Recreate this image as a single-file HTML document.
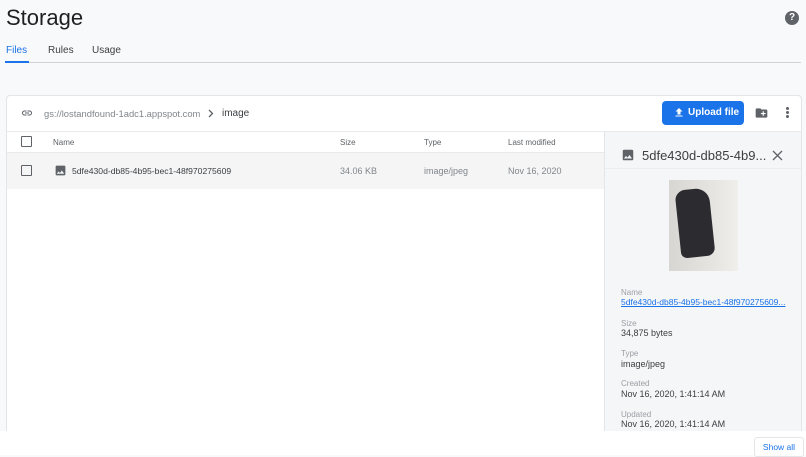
<!DOCTYPE html>
<html><head><meta charset="utf-8"><style>
*{margin:0;padding:0;box-sizing:border-box}
body{width:806px;height:455px;overflow:hidden;background:#f8f9fa;font-family:"Liberation Sans",Arial,sans-serif;color:#202124;position:relative}
.abs{position:absolute}
.t{font-size:9px;color:#5f6368}
.cb{position:absolute;width:11px;height:11px;border:1.5px solid #5f6368;border-radius:1px}
</style></head><body>
<div class="abs" style="left:6px;top:5px;font-size:22px;color:#202124">Storage</div>
<div class="abs" style="left:785px;top:11px;width:14px;height:14px;border-radius:50%;background:#5f6368;color:#fff;font-size:10px;font-weight:bold;text-align:center;line-height:14px">?</div>
<div class="abs" style="left:6px;top:45px;font-size:10px;color:#1a73e8">Files</div>
<div class="abs" style="left:48px;top:45px;font-size:10px;color:#3c4043">Rules</div>
<div class="abs" style="left:92px;top:45px;font-size:10px;color:#3c4043">Usage</div>
<div class="abs" style="left:5px;top:62px;width:796px;height:1px;background:#cfd2d6"></div>
<div class="abs" style="left:5px;top:61px;width:24px;height:2px;background:#1a73e8"></div>

<div class="abs" style="left:6px;top:95px;width:796px;height:340px;background:#fff;border:1px solid #e3e5e8;border-radius:4px"></div>
<div class="abs" style="left:7px;top:131px;width:597px;height:1px;background:#e8eaed"></div>
<div class="abs" style="left:604px;top:131px;width:197px;height:300px;background:#f5f6f7;border-left:1px solid #e3e5e8;border-top:1px solid #e8eaed"></div>
<svg class="abs" style="left:20px;top:107px" width="14" height="12" viewBox="0 0 24 24"><path d="M3.9 12c0-1.7 1.4-3.1 3.1-3.1h4V7H7c-2.8 0-5 2.2-5 5s2.2 5 5 5h4v-1.9H7c-1.7 0-3.1-1.4-3.1-3.1zM8 13h8v-2H8v2zm9-6h-4v1.9h4c1.7 0 3.1 1.4 3.1 3.1s-1.4 3.1-3.1 3.1h-4V17h4c2.8 0 5-2.2 5-5s-2.2-5-5-5z" fill="#5f6368"/></svg>
<div class="abs" style="left:44px;top:108px;font-size:9.4px;color:#80868b">gs://lostandfound-1adc1.appspot.com</div>
<svg class="abs" style="left:208px;top:109px" width="6" height="9" viewBox="0 0 6 9"><path d="M1 1l3.5 3.5L1 8" stroke="#5f6368" stroke-width="1.3" fill="none"/></svg>
<div class="abs" style="left:222px;top:108px;font-size:10px;color:#3c4043">image</div>
<div class="abs" style="left:662px;top:101px;width:82px;height:24px;background:#1a73e8;border-radius:4px;color:#fff;font-size:10px;font-weight:bold;line-height:24px;padding-left:26px">Upload file</div>
<svg class="abs" style="left:673px;top:106px" width="12" height="13" viewBox="0 0 24 24"><path d="M9 16h6v-6h4l-7-7-7 7h4zm-4 2h14v2H5z" fill="#fff"/></svg>
<svg class="abs" style="left:754px;top:106px" width="15" height="14" viewBox="0 0 24 24"><path d="M20 6h-8l-2-2H4c-1.1 0-2 .9-2 2v12c0 1.1.9 2 2 2h16c1.1 0 2-.9 2-2V8c0-1.1-.9-2-2-2zm-1 8h-3v3h-2v-3h-3v-2h3V9h2v3h3v2z" fill="#5f6368"/></svg>
<div class="abs" style="left:786px;top:107px;width:3px;height:3px;background:#5f6368;border-radius:50%;box-shadow:0 4px 0 #5f6368,0 8px 0 #5f6368"></div>

<div class="abs" style="left:7px;top:132px;width:597px;height:21px;background:#fff;border-bottom:1px solid #e8eaed"></div>
<div class="cb" style="left:21px;top:136px"></div>
<div class="abs t" style="left:53px;top:138px;font-size:8px">Name</div>
<div class="abs t" style="left:340px;top:138px;font-size:8px">Size</div>
<div class="abs t" style="left:424px;top:138px;font-size:8px">Type</div>
<div class="abs t" style="left:508px;top:138px;font-size:8px">Last modified</div>
<div class="abs" style="left:7px;top:153px;width:597px;height:36px;background:#f5f5f6"></div>
<div class="cb" style="left:21px;top:165px"></div>
<svg class="abs" style="left:54px;top:164px" width="13" height="13" viewBox="0 0 24 24"><path d="M21 19V5c0-1.1-.9-2-2-2H5c-1.1 0-2 .9-2 2v14c0 1.1.9 2 2 2h14c1.1 0 2-.9 2-2zM8.5 13.5l2.5 3 3.5-4.5 4.5 6H5l3.5-4.5z" fill="#5f6368"/></svg>
<div class="abs" style="left:72px;top:166px;font-size:8.6px;color:#3c4043">5dfe430d-db85-4b95-bec1-48f970275609</div>
<div class="abs t" style="left:340px;top:166px;color:#80868b">34.06 KB</div>
<div class="abs t" style="left:424px;top:166px;color:#80868b">image/jpeg</div>
<div class="abs t" style="left:508px;top:166px;color:#80868b">Nov 16, 2020</div>

<svg class="abs" style="left:621px;top:148px" width="14" height="14" viewBox="0 0 24 24"><path d="M21 19V5c0-1.1-.9-2-2-2H5c-1.1 0-2 .9-2 2v14c0 1.1.9 2 2 2h14c1.1 0 2-.9 2-2zM8.5 13.5l2.5 3 3.5-4.5 4.5 6H5l3.5-4.5z" fill="#5f6368"/></svg>
<div class="abs" style="left:642px;top:148px;font-size:13px;color:#3c4043">5dfe430d-db85-4b9...</div>
<svg class="abs" style="left:772px;top:150px" width="11" height="11" viewBox="0 0 11 11"><path d="M1 1l9 9M10 1l-9 9" stroke="#5f6368" stroke-width="1.3"/></svg>
<div class="abs" style="left:605px;top:168px;width:196px;height:1px;background:#ececee"></div>
<div class="abs" style="left:669px;top:180px;width:69px;height:91px;background:linear-gradient(90deg,#d8d6d2,#e8e6e2 70%,#f0efec)"></div>
<div class="abs" style="left:678px;top:189px;width:34px;height:68px;background:#2c2c30;border-radius:10px 14px 8px 6px;transform:rotate(-6deg)"></div>
<div class="abs" style="left:621px;top:288px;font-size:8px;color:#9aa0a6">Name</div>
<div class="abs" style="left:621px;top:297px;font-size:8.5px;color:#1a73e8;text-decoration:underline">5dfe430d-db85-4b95-bec1-48f970275609...</div>
<div class="abs" style="left:621px;top:319px;font-size:8px;color:#9aa0a6">Size</div>
<div class="abs" style="left:621px;top:328px;font-size:9px;color:#3c4043">34,875 bytes</div>
<div class="abs" style="left:621px;top:349px;font-size:8px;color:#9aa0a6">Type</div>
<div class="abs" style="left:621px;top:359px;font-size:9px;color:#3c4043">image/jpeg</div>
<div class="abs" style="left:621px;top:379px;font-size:8px;color:#9aa0a6">Created</div>
<div class="abs" style="left:621px;top:389px;font-size:9px;color:#3c4043">Nov 16, 2020, 1:41:14 AM</div>
<div class="abs" style="left:621px;top:410px;font-size:8px;color:#9aa0a6">Updated</div>
<div class="abs" style="left:621px;top:419px;font-size:9px;color:#3c4043">Nov 16, 2020, 1:41:14 AM</div>
<div class="abs" style="left:0;top:431px;width:806px;height:24px;background:#fff"></div>
<div class="abs" style="left:754px;top:437px;width:50px;height:20px;border:1px solid #e3e5e8;border-radius:3px;background:#fff;font-size:8.5px;color:#1a73e8;text-align:center;line-height:19px">Show all</div>
</body></html>
